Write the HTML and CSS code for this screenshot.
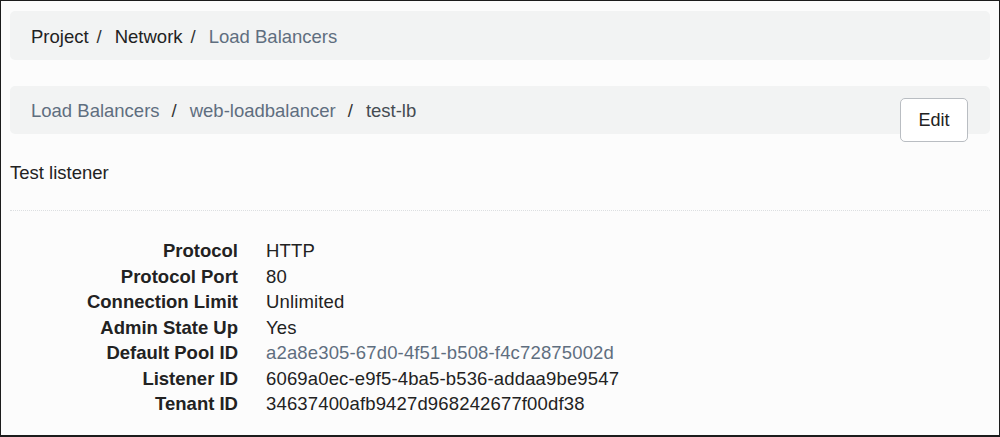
FILE: index.html
```html
<!DOCTYPE html>
<html lang="en">
<head>
<meta charset="utf-8">
<title>test-lb</title>
<link rel="stylesheet" href="styles.css">
</head>
<body>
<div class="frame">
  <nav class="crumbs crumbs-top">
    <span class="crumb">Project</span><span class="sep">/</span>
    <span class="crumb">Network</span><span class="sep">/</span>
    <a class="crumb link" href="#">Load Balancers</a>
  </nav>
  <div class="header">
    <nav class="crumbs crumbs-page">
      <a class="crumb link" href="#">Load Balancers</a><span class="sep">/</span>
      <a class="crumb link" href="#">web-loadbalancer</a><span class="sep">/</span>
      <span class="crumb active">test-lb</span>
    </nav>
    <button class="btn-edit" type="button">Edit</button>
  </div>
  <p class="desc">Test listener</p>
  <hr class="rule">
  <dl class="details">
    <dt>Protocol</dt><dd>HTTP</dd>
    <dt>Protocol Port</dt><dd>80</dd>
    <dt>Connection Limit</dt><dd>Unlimited</dd>
    <dt>Admin State Up</dt><dd>Yes</dd>
    <dt>Default Pool ID</dt><dd><a class="link" href="#">a2a8e305-67d0-4f51-b508-f4c72875002d</a></dd>
    <dt>Listener ID</dt><dd>6069a0ec-e9f5-4ba5-b536-addaa9be9547</dd>
    <dt>Tenant ID</dt><dd>34637400afb9427d968242677f00df38</dd>
  </dl>
</div>
</body>
</html>
```

FILE: styles.css
```css
* { box-sizing: border-box; }

html, body {
  margin: 0;
  padding: 0;
}

body {
  font-family: "Liberation Sans", Arial, Helvetica, sans-serif;
  font-size: 18.5px;
  color: #222;
  background: #fff;
}

.frame {
  width: 1000px;
  height: 437px;
  border: 1px solid #1c1c1c;
  border-bottom-width: 2px;
  background: #fcfcfc;
  padding: 10px 9px 0 9px;
  overflow: hidden;
}

.crumbs {
  display: flex;
  align-items: center;
  background: #f2f3f3;
  border-radius: 5px;
  padding: 0 21px;
  line-height: 25px;
  white-space: nowrap;
}

.crumbs-top {
  height: 49px;
  padding-top: 2px;
  color: #222;
}

.crumbs-top .sep {
  margin: 0 13px 0 8px;
  color: #333;
}

.header {
  position: relative;
  margin-top: 26px;
}

.crumbs-page {
  height: 48px;
}

.crumbs-page .sep {
  margin: 0 13px 0 12px;
  color: #333;
}

.link {
  color: #5f6e7f;
  text-decoration: none;
}

.active {
  color: #454b52;
}

.btn-edit {
  position: absolute;
  top: 12px;
  right: 22px;
  width: 68px;
  height: 44px;
  background: #fff;
  border: 1px solid #b9bdc2;
  border-radius: 5px;
  font-family: inherit;
  font-size: 18px;
  color: #222;
  padding: 0;
}

.desc {
  margin: 26px 0 0 0;
  line-height: 25px;
}

.rule {
  margin: 25px 0 0 0;
  border: 0;
  border-top: 1px dotted #dcdfe1;
  height: 0;
}

.details {
  display: grid;
  grid-template-columns: 228px 1fr;
  column-gap: 28px;
  margin: 27px 0 0 0;
  line-height: 25.5px;
}

.details dt {
  font-weight: bold;
  text-align: right;
  color: #222;
}

.details dd {
  margin: 0;
  color: #222;
  letter-spacing: 0.15px;
}
```
